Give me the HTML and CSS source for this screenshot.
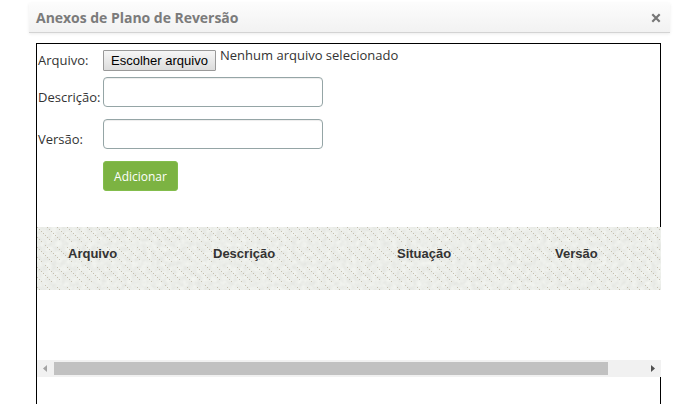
FILE: index.html
```html
<!DOCTYPE html>
<html lang="pt-BR">
<head>
<meta charset="utf-8">
<title>Anexos de Plano de Reversão</title>
<link rel="stylesheet" href="styles.css">
</head>
<body>
<div class="dialog">
  <header class="titlebar">
    <h1>Anexos de Plano de Reversão</h1>
    <svg class="close" width="10" height="10" viewBox="0 0 10 10"><path d="M1.300 1.300L8.700 8.700M8.700 1.300L1.300 8.700" stroke="#777" stroke-width="2.200"/></svg>
  </header>
  <main class="panel">
    <form class="form">
      <div class="row file-row">
        <label>Arquivo:</label>
        <button type="button" class="choose">Escolher arquivo</button>
        <span class="filename">Nenhum arquivo selecionado</span>
      </div>
      <div class="row"><label>Descrição:</label><input type="text"></div>
      <div class="row"><label>Versão:</label><input type="text"></div>
      <button type="button" class="add">Adicionar</button>
    </form>
    <section class="list">
      <div class="head">
        <svg class="texture" width="624" height="63">
          <defs>
            <filter id="grain" x="0" y="0" width="100%" height="100%" color-interpolation-filters="sRGB">
              <feTurbulence type="fractalNoise" baseFrequency="0.2" numOctaves="2" seed="4"/>
              <feColorMatrix values="0.08 0 0 0 0.885  0.08 0 0 0 0.893  0.08 0 0 0 0.876  0 0 0 0 1"/>
            </filter>
            <g id="dash"><path d="M0 0h1v1h-1zM2 2h1v1h-1zM4 4h1v1h-1zM6 6h1v1h-1zM8 8h1v1h-1zM10 10h1v1h-1zM12 12h1v1h-1zM14 14h1v1h-1z"/></g>
            <pattern id="hatch" width="40" height="20" patternUnits="userSpaceOnUse" shape-rendering="crispEdges">
              <g fill="#c6c0b0">
                <use href="#dash"/><use href="#dash" x="20"/>
                <use href="#dash" x="8" y="-2"/><use href="#dash" x="8" y="18"/>
                <use href="#dash" x="30"/><use href="#dash" x="-10"/>
              </g>
            </pattern>
          </defs>
          <rect width="624" height="63" filter="url(#grain)"/>
          <rect width="624" height="63" fill="url(#hatch)"/>
        </svg>
        <span>Arquivo</span><span>Descrição</span><span>Situação</span><span>Versão</span>
      </div>
      <div class="empty"></div>
      <div class="scrollbar">
        <svg width="17" height="17"><path d="M10 5v7L6 8.500z" fill="#a3a3a3"/></svg>
        <div class="thumb"></div>
        <svg width="17" height="17"><path d="M7 5v7l4-3.500z" fill="#505050"/></svg>
      </div>
    </section>
  </main>
</div>
</body>
</html>
```
FILE: styles.css
```css
* { box-sizing: border-box; }
body { margin: 0; background: #fff; font: 13px "Open Sans", sans-serif; color: #333; overflow: hidden; }
.dialog { width: 641px; margin: 3px 0 0 29px; }
.titlebar { height: 30px; display: flex; align-items: center; justify-content: space-between; padding: 0 9px 0 7px; border-bottom: 1px solid #d3d3d3; background: linear-gradient(#fcfcfc, #f2f2f2); box-shadow: 0 1px 3px rgba(0,0,0,.08); }
h1 { margin: 0; font-size: 14px; line-height: 20px; font-weight: 700; letter-spacing: -.03px; color: #7b7b7b; }
.panel { width: 625px; height: 361px; margin: 10px 0 0 7px; border: 1px solid #000; border-bottom: 0; }
.form { height: 183px; padding: 6px 0 0 1px; }
.row { display: flex; align-items: center; height: 42px; }
.row label { width: 65px; padding-top: 10px; line-height: 18px; white-space: nowrap; }
.row input { width: 220px; height: 30px; border: 1px solid #95a5a6; border-radius: 4px; background: #fff; box-shadow: inset 0 1px 1px rgba(0,0,0,.075); }
.file-row { height: 21px; }
.file-row label { padding: 0; margin-top: -2px; }
.choose { width: 113px; height: 21px; padding: 0; border: 1px solid #999; border-radius: 1px; background: linear-gradient(#f6f6f6, #dcdcdc); font: 13px "Liberation Sans", Arial, sans-serif; color: #000; }
.filename { align-self: flex-start; margin: -4px 0 0 4px; line-height: 18px; }
.add { display: block; width: 75px; height: 30px; margin: 6px 0 0 65px; padding: 0; border: 1px solid #83bd4c; border-radius: 3px; background: #7cb342; color: #fff; font: 12px "Open Sans", sans-serif; }
.list { width: 624px; background: #fff; }
.head { position: relative; height: 63px; display: grid; grid-template-columns: 145px 184px 158px 1fr; padding: 19px 0 0 31px; background: #ebede8; font: bold 13px/16px "Liberation Sans", Arial, sans-serif; color: #333; }
.head span { position: relative; }
.texture { position: absolute; left: 0; top: 0; }
.empty { height: 70px; }
.scrollbar { display: flex; align-items: center; height: 17px; background: #f1f1f1; }
.thumb { width: 554px; height: 13px; margin-right: 36px; background: #c1c1c1; }
```
